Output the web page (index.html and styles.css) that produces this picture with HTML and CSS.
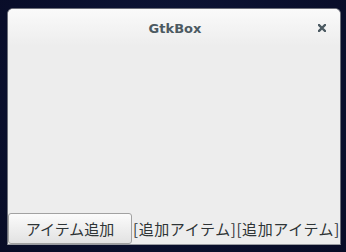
FILE: index.html
```html
<!DOCTYPE html>
<html>
<head>
<meta charset="utf-8">
<link rel="stylesheet" href="styles.css">
</head>
<body>
<div class="window">
  <div class="header">
    <span class="title">GtkBox</span>
    <svg class="close" width="8" height="8" viewBox="0 0 8 8"><path d="M1 1L7 7M7 1L1 7" stroke="#4c5a62" stroke-width="2.4" stroke-linecap="square"/></svg>
  </div>
  <div class="content">
    <div class="row">
      <button class="btn">アイテム追加</button>
      <span class="label">[追加アイテム]</span>
      <span class="label">[追加アイテム]</span>
    </div>
  </div>
</div>
</body>
</html>
```
FILE: styles.css
```css
html, body {
  margin: 0;
  padding: 0;
}
body {
  width: 346px;
  height: 252px;
  background: radial-gradient(ellipse at 50% 40%, #111b40 0%, #0a102e 60%, #080c26 100%);
  overflow: hidden;
  padding-top: 8px;
  padding-left: 7px;
  box-sizing: border-box;
}
.window {
  width: 334px;
  height: 237px;
  box-sizing: border-box;
  border: 1px solid #6b6e78;
  border-bottom-color: #9a9ca2;
  border-radius: 6px 6px 0 0;
  background: #ededed;
  display: flex;
  flex-direction: column;
  overflow: hidden;
}
.header {
  height: 37px;
  flex: none;
  position: relative;
  display: flex;
  align-items: center;
  justify-content: center;
  background: linear-gradient(#fafafa, #ededed);
}
.title {
  font-family: "DejaVu Sans", sans-serif;
  font-weight: bold;
  font-size: 13px;
  color: #4c5a62;
  margin-top: 1px;
  margin-left: 2px;
}
.close {
  position: absolute;
  right: 14px;
  top: 15px;
}
.content {
  flex: 1;
  display: flex;
  flex-direction: column;
  justify-content: flex-end;
}
.row {
  display: flex;
  align-items: center;
  font-family: "Noto Sans CJK JP", sans-serif;
  font-size: 15px;
  color: #2e3436;
}
.btn {
  width: 124px;
  height: 31px;
  margin: 0;
  padding: 0;
  box-sizing: border-box;
  border: 1px solid #a1a1a1;
  border-radius: 3px;
  background: linear-gradient(#fbfbfb, #e2e2e2);
  font-family: "Noto Sans CJK JP", sans-serif;
  font-size: 15px;
  color: #2e3436;
  line-height: 1;
}
.label {
  line-height: 1;
  white-space: nowrap;
  letter-spacing: 0.6px;
}
.btn + .label {
  margin-left: 1px;
}
```
